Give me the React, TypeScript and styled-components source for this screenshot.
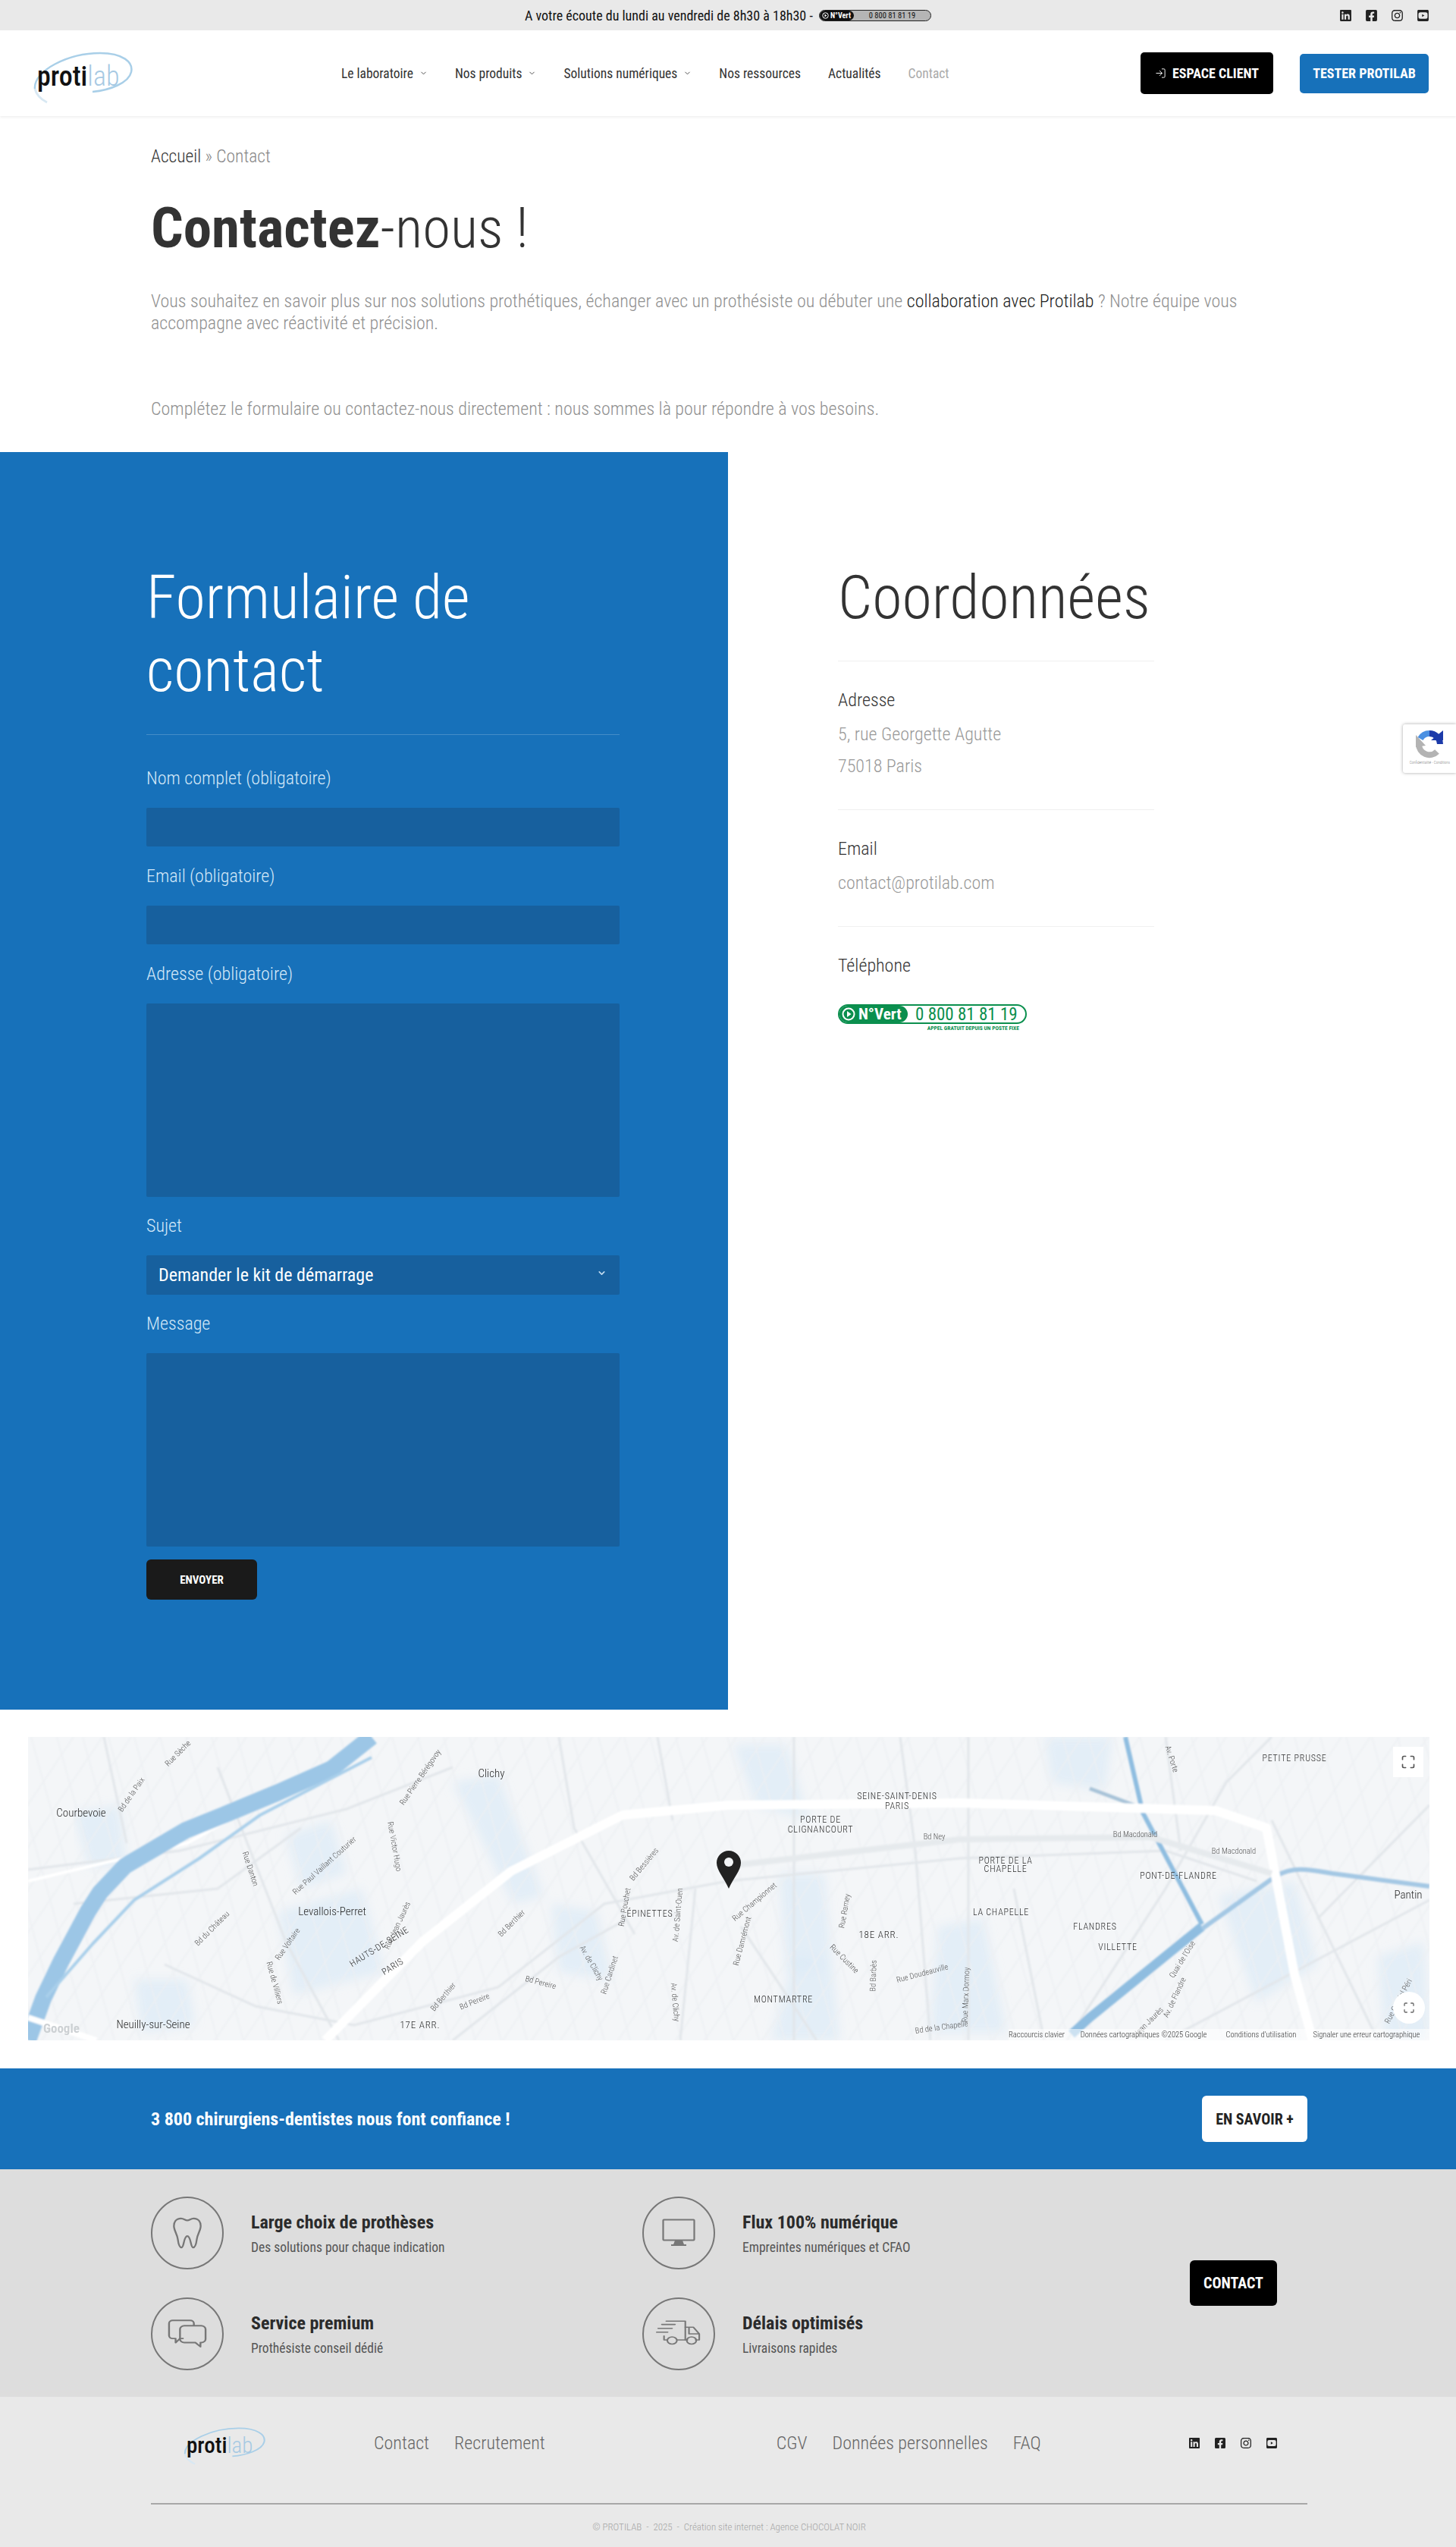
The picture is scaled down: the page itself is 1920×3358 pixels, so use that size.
import React from 'react'
import styled, { createGlobalStyle } from 'styled-components'
import { FaLinkedin, FaFacebookSquare, FaInstagram, FaYoutubeSquare } from 'react-icons/fa'
import { LogIn, ChevronDown, Maximize } from 'lucide-react'

const BLUE = '#1771ba'
const FIELD = '#17609e'
const GREEN = '#0b8f4e'
const FONT = `'Roboto Condensed', Roboto, 'Liberation Sans', sans-serif`

const GlobalStyle = createGlobalStyle`
  * { box-sizing: border-box; }
  html, body { margin: 0; padding: 0; background: #fff; }
  body {
    font-family: ${FONT};
    font-stretch: 75%;
    color: #333;
  }
  p, h1, h2, h3, ul { margin: 0; padding: 0; }
`

const thinRoads = [
  'M0 175 L200 150 L420 95 L560 40',
  'M250 40 L340 270 L410 400',
  'M180 300 L300 355 L430 380 L620 330 L760 220 L923 190 L1229 160 L1500 150 L1620 190',
  'M560 400 L700 290 L790 240',
  'M700 0 L720 120 L800 260',
  'M1010 0 L1010 400',
  'M1150 0 L1170 150 L1190 400',
  'M1240 0 L1240 400',
  'M1370 400 L1500 200 L1580 60 L1640 0',
  'M1500 400 L1848 215',
  'M1640 110 L1780 400',
  'M1848 90 L1700 240',
  'M100 0 L130 140',
  'M1500 0 L1520 150',
  'M830 0 L850 110',
  'M880 200 L860 400',
  'M940 250 L1040 400',
  'M1300 200 L1340 400',
  'M60 220 L250 200 L360 120',
]
const patches = [
  'M330 230 L440 200 L470 310 L350 340 Z',
  'M340 130 L400 110 L420 180 L360 200 Z',
  'M560 60 L620 50 L680 210 L640 220 Z',
  'M930 10 L1000 10 L1030 110 L960 90 Z',
  'M990 180 L1050 180 L1060 300 L1000 310 Z',
  'M1200 250 L1260 240 L1290 390 L1190 390 Z',
  'M1570 210 L1670 190 L1700 300 L1620 350 Z',
  'M1340 0 L1430 0 L1420 70 L1350 60 Z',
  'M1010 290 L1060 300 L1070 400 L980 400 Z',
  'M690 220 L750 230 L770 320 L700 310 Z',
  'M60 100 L120 90 L130 170 L80 170 Z',
  'M1840 270 L1780 290 L1790 400 L1848 400 Z',
  'M140 320 L210 320 L220 380 L150 390 Z',
]

// fine street mesh, drawn as two diagonal families
const meshA = Array.from({ length: 62 }, (_, i) => `M${i * 34 - 200} 0 L${i * 34 - 90} 400`)
const meshB = Array.from({ length: 62 }, (_, i) => `M${i * 38 + 60} 0 L${i * 38 - 210} 400`)

const places = [
  { x: 70, y: 100, t: 'Courbevoie', s: 15 },
  { x: 611, y: 48, t: 'Clichy', s: 15 },
  { x: 401, y: 230, t: 'Levallois-Perret', s: 15 },
  { x: 165, y: 379, t: 'Neuilly-sur-Seine', s: 15 },
  { x: 1820, y: 208, t: 'Pantin', s: 15 },
  { x: 517, y: 379, t: '17E ARR.', s: 13 },
  { x: 820, y: 232, t: 'ÉPINETTES', s: 12 },
  { x: 1146, y: 77, t: 'SEINE-SAINT-DENIS', s: 12 },
  { x: 1146, y: 90, t: 'PARIS', s: 12 },
  { x: 1045, y: 108, t: 'PORTE DE', s: 12 },
  { x: 1045, y: 121, t: 'CLIGNANCOURT', s: 12 },
  { x: 1289, y: 162, t: 'PORTE DE LA', s: 12 },
  { x: 1289, y: 173, t: 'CHAPELLE', s: 12 },
  { x: 1517, y: 182, t: 'PONT-DE-FLANDRE', s: 12 },
  { x: 1283, y: 230, t: 'LA CHAPELLE', s: 12 },
  { x: 1407, y: 249, t: 'FLANDRES', s: 12 },
  { x: 1437, y: 276, t: 'VILLETTE', s: 12 },
  { x: 1122, y: 260, t: '18E ARR.', s: 13 },
  { x: 996, y: 345, t: 'MONTMARTRE', s: 12 },
  { x: 1670, y: 27, t: 'PETITE PRUSSE', s: 12 },
]
const streets = [
  { x: 139, y: 78, r: -55, t: 'Bd de la Paix' },
  { x: 520, y: 55, r: -55, t: 'Rue Pierre Bérégovoy' },
  { x: 393, y: 172, r: -42, t: 'Rue Paul Vaillant Couturier' },
  { x: 290, y: 175, r: 72, t: 'Rue Danton' },
  { x: 480, y: 145, r: 80, t: 'Rue Victor Hugo' },
  { x: 245, y: 255, r: -45, t: 'Bd du Château' },
  { x: 345, y: 275, r: -55, t: 'Rue Voltaire' },
  { x: 322, y: 325, r: 75, t: 'Rue de Villiers' },
  { x: 490, y: 250, r: -65, t: 'Rue Jean Jaurès' },
  { x: 550, y: 345, r: -50, t: 'Bd Berthier' },
  { x: 590, y: 352, r: -22, t: 'Bd Pereire' },
  { x: 675, y: 327, r: 15, t: 'Bd Pereire' },
  { x: 640, y: 248, r: -45, t: 'Bd Berthier' },
  { x: 740, y: 300, r: 60, t: 'Av. de Clichy' },
  { x: 770, y: 315, r: -72, t: 'Rue Cardinet' },
  { x: 815, y: 170, r: -50, t: 'Bd Bessières' },
  { x: 790, y: 225, r: -80, t: 'Rue Pouchet' },
  { x: 860, y: 235, r: -85, t: 'Av. de Saint-Ouen' },
  { x: 850, y: 350, r: 85, t: 'Av. de Clichy' },
  { x: 960, y: 220, r: -40, t: 'Rue Championnet' },
  { x: 945, y: 270, r: -75, t: 'Rue Damrémont' },
  { x: 1080, y: 230, r: -80, t: 'Rue Ramey' },
  { x: 1074, y: 295, r: 45, t: 'Rue Custine' },
  { x: 1118, y: 315, r: -88, t: 'Bd Barbès' },
  { x: 1180, y: 315, r: -15, t: 'Rue Doudeauville' },
  { x: 1240, y: 340, r: -88, t: 'Rue Marx Dormoy' },
  { x: 1205, y: 386, r: -8, t: 'Bd de la Chapelle' },
  { x: 1195, y: 135, r: 0, t: 'Bd Ney' },
  { x: 1460, y: 132, r: 0, t: 'Bd Macdonald' },
  { x: 1590, y: 154, r: 0, t: 'Bd Macdonald' },
  { x: 1515, y: 345, r: -65, t: 'Av. de Flandre' },
  { x: 1525, y: 295, r: -58, t: 'Quai de l\u2019Oise' },
  { x: 1480, y: 378, r: -45, t: 'Jean Jaurès' },
  { x: 1810, y: 350, r: -62, t: 'Rue Gabriel Péri' },
  { x: 1505, y: 30, r: 72, t: 'Av. Porte' },
  { x: 200, y: 24, r: -45, t: 'Rue Sèche' },
]
const legal = [
  { x: 1330, t: 'Raccourcis clavier' },
  { x: 1471, t: 'Données cartographiques ©2025 Google' },
  { x: 1626, t: 'Conditions d\u2019utilisation' },
  { x: 1765, t: 'Signaler une erreur cartographique' },
]

const MapDrawing = () => (
  <svg width="1848" height="400" viewBox="0 0 1848 400" style={{ display: 'block' }}>
    <defs>
      <filter id="soft" x="0" y="0" width="100%" height="100%">
        <feGaussianBlur stdDeviation="1.2" />
      </filter>
      <filter id="softer" x="0" y="0" width="100%" height="100%">
        <feGaussianBlur stdDeviation="7" />
      </filter>
    </defs>
    <rect width="1848" height="400" fill="#f4f6f8" />
    <g filter="url(#softer)">
      {patches.map((d, i) => (
        <path key={i} d={d} fill="#d6e8f5" opacity="0.55" />
      ))}
    </g>
    <g filter="url(#soft)">
      <g stroke="#edf0f3" strokeWidth="1.5" fill="none">
        {meshA.map((d, i) => <path key={i} d={d} />)}
        {meshB.map((d, i) => <path key={i} d={d} />)}
      </g>
      {thinRoads.map((d, i) => (
        <path key={i} d={d} fill="none" stroke="#e2e6ea" strokeWidth="3" />
      ))}
      <path d="M0 190 L210 140 L300 90" fill="none" stroke="#fff" strokeWidth="4" />
      <path d="M453 0 L400 42 L330 73 L265 100 L208 123 L128 170 L95 205 L79 230 L43 297 L20 345 L0 400" fill="none" stroke="#9cc6e6" strokeWidth="22" strokeLinejoin="round" />
      <path d="M453 27 L306 103 L226 160 L140 215 L85 273 L24 343" fill="none" stroke="#a9cfea" strokeWidth="4" strokeLinejoin="round" />
      <path d="M1447 0 L1470 100 L1548 247" fill="none" stroke="#8fbde0" strokeWidth="6" />
      <path d="M1548 250 L1400 370 L1376 392" fill="none" stroke="#8fbde0" strokeWidth="12" />
      <path d="M1548 253 L1646 183 C1670 170 1690 175 1720 180 L1848 197" fill="none" stroke="#a4c8e4" strokeWidth="6" />
      <path d="M1400 68 L1480 98" fill="none" stroke="#a8c3d8" strokeWidth="5" />
      <path d="M392 400 L520 270 L637 177 L784 103 L923 90 L1229 87 L1566 97 L1633 120 L1670 313 L1694 400" fill="none" stroke="#fff" strokeWidth="12" strokeLinejoin="round" />
      <path d="M0 370 L90 400" fill="none" stroke="#fff" strokeWidth="8" />
      <path d="M923 170 L1229 135 L1480 132 L1640 180" fill="none" stroke="#e6eaed" strokeWidth="8" />
    </g>
    <g fontFamily={FONT} fill="#555">
      {streets.map(s => (
        <text key={s.t + s.x} x={s.x} y={s.y} fontSize="10.5" textAnchor="middle" transform={`rotate(${s.r} ${s.x} ${s.y})`}>
          {s.t}
        </text>
      ))}
    </g>
    <g fontFamily={FONT} fill="#2a2a2a" textAnchor="middle">
      {places.map(p => (
        <text key={p.t + p.x} x={p.x} y={p.y + 5} fontSize={p.s} letterSpacing={p.s < 14 ? 0.8 : 0}>
          {p.t}
        </text>
      ))}
      <text x="465" y="280" fontSize="12" letterSpacing="0.6" transform="rotate(-32 465 280)">HAUTS-DE-SEINE</text>
      <text x="483" y="306" fontSize="12" letterSpacing="0.6" transform="rotate(-32 483 306)">PARIS</text>
    </g>
    <text x="20" y="390" fontFamily={FONT} fontSize="17" fontWeight="700" fill="#cdd1d4">Google</text>
    <rect x="1293" y="385" width="555" height="15" fill="#fff" opacity="0.55" />
    <g fontFamily={FONT} fill="#333" fontSize="10.5" textAnchor="middle">
      {legal.map(l => (
        <text key={l.t} x={l.x} y={396}>{l.t}</text>
      ))}
    </g>
    <path d="M924 200 C918 186 908 176 908 166 A16 16 0 0 1 940 166 C940 176 930 186 924 200 Z" fill="#222" />
    <circle cx="924" cy="165" r="6" fill="#f2f4f6" />
  </svg>
)

const ToothIcon = () => (
  <svg width="40" height="44" viewBox="0 0 48 52" fill="none" stroke="#777" strokeWidth="2.8" strokeLinejoin="round">
    <path d="M14 3 C6 3 2 9 3 17 C4 24 8 28 9 36 C10 44 12 49 15 49 C19 49 18 31 24 31 C30 31 29 49 33 49 C36 49 38 44 39 36 C40 28 44 24 45 17 C46 9 42 3 34 3 C29 3 28 6 24 6 C20 6 19 3 14 3 Z" />
  </svg>
)
const ScreenIcon = () => (
  <svg width="44" height="37" viewBox="0 0 44 37" fill="none" stroke="#777" strokeWidth="2.2">
    <rect x="1.5" y="1.5" width="41" height="27" rx="1" />
    <path d="M18 29 L16.5 33 H27.5 L26 29 Z M12 35 H32" fill="#777" strokeWidth="2" />
  </svg>
)
const ChatIcon = () => (
  <svg width="52" height="40" viewBox="0 0 54 52" preserveAspectRatio="none" fill="none" stroke="#777" strokeWidth="2.5" strokeLinejoin="round">
    <path d="M22 34 H17 L11 41 V34 H7 A5 5 0 0 1 2 29 V8 A5 5 0 0 1 7 3 H31 A5 5 0 0 1 36 8 V12" />
    <path d="M23 12 H46 A6 6 0 0 1 52 18 V35 A6 6 0 0 1 46 41 H45 V48 L38 41 H23 A6 6 0 0 1 17 35 V18 A6 6 0 0 1 23 12 Z" />
  </svg>
)
const TruckIcon = () => (
  <svg width="60" height="38" viewBox="0 0 62 52" preserveAspectRatio="none" fill="none" stroke="#777" strokeWidth="2.2" strokeLinejoin="round" strokeLinecap="round">
    <path d="M14 3 H40 V37 H29 M15 37 H11 V30" />
    <path d="M40 14 H51 L59 26 V37 H54 M43 37 H40 M45 14 V26 H59" />
    <circle cx="22" cy="38" r="6.5" />
    <circle cx="48.5" cy="38" r="6.5" />
    <path d="M8 9 H26 M3 16 H22 M1 23 H16" />
  </svg>
)

const socials = [FaLinkedin, FaFacebookSquare, FaInstagram, FaYoutubeSquare]
const features = [
  { icon: <ToothIcon />, title: 'Large choix de prothèses', text: 'Des solutions pour chaque indication' },
  { icon: <ScreenIcon />, title: 'Flux 100% numérique', text: 'Empreintes numériques et CFAO' },
  { icon: <ChatIcon />, title: 'Service premium', text: 'Prothésiste conseil dédié' },
  { icon: <TruckIcon />, title: 'Délais optimisés', text: 'Livraisons rapides' },
]

const Logo = ({ small }: { small?: boolean }) => (
  <LogoBox $small={small}>
    <LogoArc viewBox="0 0 135 80" preserveAspectRatio="none">
      <path d="M6 60 C4 36 50 13 92 13 C122 13 136 25 133 38 C130 52 105 62 82 64" fill="none" stroke="#a9cfe8" strokeWidth="2.5" />
      <path d="M6 60 C8 68 14 74 22 78" fill="none" stroke="#d8e8f3" strokeWidth="3" />
    </LogoArc>
    <LogoDark>proti</LogoDark>
    <LogoLight>lab</LogoLight>
  </LogoBox>
)

const GreenNumber = ({ small }: { small?: boolean }) => (
  <NumberPill $small={small}>
    <NumberTag $small={small}>
      <svg width={small ? 9 : 18} height={small ? 9 : 18} viewBox="0 0 18 18">
        <circle cx="9" cy="9" r="7.5" fill="none" stroke="#fff" strokeWidth="2" />
        <path d="M7 5 L12.5 9 L7 13 Z" fill="#fff" />
      </svg>
      N°Vert
    </NumberTag>
    <NumberDigits $small={small}>0 800 81 81 19</NumberDigits>
  </NumberPill>
)

const App = () => (
  <Page>
    <GlobalStyle />
    <TopBar>
      <span />
      <TopText>
        A votre écoute du lundi au vendredi de 8h30 à 18h30 - <GreenNumber small />
      </TopText>
      <SocialRow $gap={17} $size={17}>
        {socials.map((Icon, i) => <Icon key={i} />)}
      </SocialRow>
    </TopBar>

    <Header>
      <Logo />
      <Nav>
        <NavItem>Le laboratoire <ChevronDown size={11} /></NavItem>
        <NavItem>Nos produits <ChevronDown size={11} /></NavItem>
        <NavItem>Solutions numériques <ChevronDown size={11} /></NavItem>
        <NavItem>Nos ressources</NavItem>
        <NavItem>Actualités</NavItem>
        <NavItem $muted>Contact</NavItem>
      </Nav>
      <HeaderActions>
        <HeaderButton $bg="#000" $w={175} $h={55}><LogIn size={15} strokeWidth={1.5} /> ESPACE CLIENT</HeaderButton>
        <HeaderButton $bg={BLUE} $w={170} $h={52}>TESTER PROTILAB</HeaderButton>
      </HeaderActions>
    </Header>

    <Intro>
      <Breadcrumb><b>Accueil</b> » Contact</Breadcrumb>
      <PageTitle><strong>Contactez</strong>-nous !</PageTitle>
      <Lead>
        Vous souhaitez en savoir plus sur nos solutions prothétiques, échanger avec un prothésiste ou débuter une <b>collaboration avec Protilab</b> ? Notre équipe vous accompagne avec réactivité et précision.
      </Lead>
      <LeadLast>Complétez le formulaire ou contactez-nous directement : nous sommes là pour répondre à vos besoins.</LeadLast>
    </Intro>

    <ContactGrid>
      <FormPanel>
        <PanelTitle>Formulaire de<br />contact</PanelTitle>
        <PanelRule />
        <FieldLabel>Nom complet (obligatoire)</FieldLabel>
        <FieldInput />
        <FieldLabel>Email (obligatoire)</FieldLabel>
        <FieldInput />
        <FieldLabel>Adresse (obligatoire)</FieldLabel>
        <FieldArea />
        <FieldLabel>Sujet</FieldLabel>
        <SelectWrap>
          <FieldSelect defaultValue="kit">
            <option value="kit">Demander le kit de démarrage</option>
          </FieldSelect>
          <SelectChevron><ChevronDown size={13} strokeWidth={3} /></SelectChevron>
        </SelectWrap>
        <FieldLabel>Message</FieldLabel>
        <FieldArea />
        <SendButton type="button">ENVOYER</SendButton>
      </FormPanel>

      <Details>
        <DetailsTitle>Coordonnées</DetailsTitle>
        <DetailBlock>
          <DetailLabel>Adresse</DetailLabel>
          <DetailLine>5, rue Georgette Agutte</DetailLine>
          <DetailLine>75018 Paris</DetailLine>
        </DetailBlock>
        <DetailBlock>
          <DetailLabel>Email</DetailLabel>
          <DetailLine>contact@protilab.com</DetailLine>
        </DetailBlock>
        <DetailBlock>
          <DetailLabel>Téléphone</DetailLabel>
          <PhoneWrap>
            <GreenNumber />
            <PhoneNote>APPEL GRATUIT DEPUIS UN POSTE FIXE</PhoneNote>
          </PhoneWrap>
        </DetailBlock>
      </Details>
    </ContactGrid>

    <MapSection>
      <MapFrame>
        <MapDrawing />
        <MapFullscreen><Maximize size={20} strokeWidth={2} /></MapFullscreen>
        <MapCompass><Maximize size={16} strokeWidth={2} /></MapCompass>
      </MapFrame>
    </MapSection>

    <Banner>
      <BannerText>3 800 chirurgiens-dentistes nous font confiance !</BannerText>
      <BannerButton>EN SAVOIR +</BannerButton>
    </Banner>

    <Features>
      <FeatureGrid>
        {features.map(f => (
          <Feature key={f.title}>
            <FeatureCircle>{f.icon}</FeatureCircle>
            <div>
              <FeatureTitle>{f.title}</FeatureTitle>
              <FeatureText>{f.text}</FeatureText>
            </div>
          </Feature>
        ))}
      </FeatureGrid>
      <ContactButton>CONTACT</ContactButton>
    </Features>

    <Footer>
      <FooterRow>
        <Logo small />
        <FooterLinks $left={143}>
          <FooterLink>Contact</FooterLink>
          <FooterLink>Recrutement</FooterLink>
        </FooterLinks>
        <FooterLinks $left={305}>
          <FooterLink>CGV</FooterLink>
          <FooterLink>Données personnelles</FooterLink>
          <FooterLink>FAQ</FooterLink>
        </FooterLinks>
        <FooterSocials>
          <SocialRow $gap={18} $size={16}>
            {socials.map((Icon, i) => <Icon key={i} />)}
          </SocialRow>
        </FooterSocials>
      </FooterRow>
      <FooterRule />
      <Copyright>© PROTILAB  -  2025  -  Création site internet : Agence CHOCOLAT NOIR</Copyright>
    </Footer>

    <Recaptcha>
      <svg width="40" height="40" viewBox="0 0 40 40" fill="none">
        <path d="M20 6 A14 14 0 0 0 8 13" stroke="#4a90e2" strokeWidth="8" />
        <path d="M20 6 A14 14 0 0 1 34 20" stroke="#1c3aa9" strokeWidth="8" />
        <path d="M22 15 L38 15 L38 2 Z" fill="#1c3aa9" />
        <path d="M6 20 A14 14 0 0 0 30 30" stroke="#b3b3b3" strokeWidth="8" />
        <path d="M2 8 L2 24 L15 22 Z" fill="#b3b3b3" />
      </svg>
      <RecaptchaText>Confidentialité - Conditions</RecaptchaText>
    </Recaptcha>
  </Page>
)

const Page = styled.div`
  position: relative;
  width: 1920px;
  overflow: hidden;
  font-family: ${FONT};
  font-weight: 300;
`

const TopBar = styled.div`
  height: 40px;
  background: #e9e9e9;
  display: grid;
  grid-template-columns: 1fr auto 1fr;
  align-items: center;
  padding: 0 35px;
`

const TopText = styled.div`
  display: flex;
  align-items: center;
  gap: 4px;
  white-space: pre;
  font-size: 18px;
  font-weight: 400;
  color: #111;
`

const SocialRow = styled.div<{ $gap: number; $size: number }>`
  display: flex;
  justify-content: flex-end;
  gap: ${p => p.$gap}px;
  color: #222;
  font-size: ${p => p.$size}px;
  line-height: 0;
`

const NumberPill = styled.span<{ $small?: boolean }>`
  display: inline-flex;
  align-items: center;
  height: ${p => (p.$small ? 15 : 26)}px;
  width: ${p => (p.$small ? 148 : 249)}px;
  border-radius: 14px;
  border: ${p => (p.$small ? 1 : 2)}px solid ${p => (p.$small ? '#222' : GREEN)};
  background: ${p => (p.$small ? '#b5b5b5' : '#fff')};
  overflow: hidden;
`

const NumberTag = styled.span<{ $small?: boolean }>`
  display: inline-flex;
  align-items: center;
  gap: ${p => (p.$small ? 2 : 4)}px;
  height: 100%;
  padding: 0 ${p => (p.$small ? 4 : 8)}px 0 3px;
  border-radius: 0 12px 12px 0;
  background: ${p => (p.$small ? '#111' : GREEN)};
  color: #fff;
  font-family: Roboto, sans-serif;
  font-weight: 700;
  font-size: ${p => (p.$small ? 10 : 21)}px;
`

const NumberDigits = styled.span<{ $small?: boolean }>`
  flex: 1;
  text-align: center;
  font-family: Roboto, sans-serif;
  font-weight: 400;
  font-size: ${p => (p.$small ? 10.5 : 23)}px;
  color: ${p => (p.$small ? '#111' : GREEN)};
  white-space: nowrap;
`

const Header = styled.header`
  height: 113px;
  display: flex;
  align-items: center;
  padding: 0 36px 0 40px;
  background: #fff;
  box-shadow: 0 2px 3px rgba(0, 0, 0, 0.06);
  position: relative;
`

const LogoBox = styled.div<{ $small?: boolean }>`
  position: relative;
  width: ${p => (p.$small ? 111 : 135)}px;
  height: ${p => (p.$small ? 58 : 80)}px;
  margin-left: ${p => (p.$small ? 40 : 0)}px;
  padding: ${p => (p.$small ? '6px 0 0 7px' : '8px 0 0 9px')};
  display: flex;
  align-items: center;
  font-family: Roboto, sans-serif;
  font-size: ${p => (p.$small ? 29 : 36)}px;
`

const LogoArc = styled.svg`
  position: absolute;
  inset: 0;
  width: 100%;
  height: 100%;
`

const LogoDark = styled.span`
  color: #111;
  font-weight: 500;
  position: relative;
`

const LogoLight = styled.span`
  color: #a6c9e3;
  font-weight: 300;
  position: relative;
`

const Nav = styled.nav`
  display: flex;
  align-items: center;
  gap: 36px;
  margin-left: 275px;
`

const NavItem = styled.a<{ $muted?: boolean }>`
  display: inline-flex;
  align-items: center;
  gap: 8px;
  font-size: 17.5px;
  font-weight: 400;
  color: ${p => (p.$muted ? '#aaa' : '#333')};
  svg { color: #444; }
`

const HeaderActions = styled.div`
  margin-left: auto;
  display: flex;
  align-items: center;
  gap: 35px;
`

const HeaderButton = styled.a<{ $bg: string; $w: number; $h: number }>`
  display: flex;
  align-items: center;
  justify-content: center;
  gap: 8px;
  width: ${p => p.$w}px;
  height: ${p => p.$h}px;
  border-radius: 5px;
  background: ${p => p.$bg};
  color: #fff;
  font-size: 18px;
  font-weight: 700;
`

const Intro = styled.section`
  padding: 38px 199px 0;
  height: 443px;
`

const Breadcrumb = styled.div`
  font-size: 23.5px;
  line-height: 30px;
  color: #888;
  b { font-weight: 300; color: #333; }
`

const PageTitle = styled.h1`
  margin-top: 31px;
  font-size: 75px;
  line-height: 96px;
  font-weight: 300;
  color: #333;
  strong { font-weight: 700; }
`

const Lead = styled.p`
  margin-top: 35px;
  font-size: 24px;
  line-height: 29px;
  color: #909090;
  max-width: 1480px;
  b { font-weight: 300; color: #222; }
`

const LeadLast = styled(Lead)`
  margin-top: 84px;
`

const ContactGrid = styled.section`
  display: grid;
  grid-template-columns: 960px 1fr;
  height: 1658px;
`

const FormPanel = styled.form`
  background: ${BLUE};
  padding: 144px 143px 0 193px;
`

const PanelTitle = styled.h2`
  font-size: 80px;
  line-height: 96px;
  font-weight: 300;
  color: #fff;
`

const PanelRule = styled.div`
  height: 1px;
  margin: 36px 0 42px;
  background: rgba(255, 255, 255, 0.2);
`

const FieldLabel = styled.label`
  display: block;
  font-size: 24px;
  line-height: 30px;
  color: #d4e8f8;
  margin-bottom: 24px;
`

const FieldInput = styled.input`
  display: block;
  width: 100%;
  height: 51px;
  margin-bottom: 24px;
  border: 0;
  border-radius: 2px;
  background: ${FIELD};
`

const FieldArea = styled.textarea`
  display: block;
  width: 100%;
  height: 255px;
  margin-bottom: 23px;
  border: 0;
  border-radius: 2px;
  background: ${FIELD};
  resize: none;
`

const SelectWrap = styled.div`
  position: relative;
  margin-bottom: 23px;
`

const FieldSelect = styled.select`
  display: block;
  width: 100%;
  height: 52px;
  padding: 0 16px;
  border: 0;
  border-radius: 2px;
  appearance: none;
  background: ${FIELD};
  color: #fff;
  font-family: ${FONT};
  font-stretch: 75%;
  font-size: 24px;
  font-weight: 400;
`

const SelectChevron = styled.span`
  position: absolute;
  right: 17px;
  top: 17px;
  color: #c3dcf0;
  line-height: 0;
`

const SendButton = styled.button`
  display: block;
  width: 146px;
  height: 53px;
  margin-top: -6px;
  border: 0;
  border-radius: 6px;
  background: #1a1a1a;
  color: #fff;
  font-family: ${FONT};
  font-stretch: 75%;
  font-size: 15px;
  font-weight: 700;
`

const Details = styled.div`
  padding: 144px 0 0 145px;
  width: 562px;
`

const DetailsTitle = styled.h2`
  font-size: 80px;
  line-height: 96px;
  font-weight: 300;
  color: #333;
  margin-bottom: 35px;
`

const DetailBlock = styled.div`
  border-top: 1px solid #f0f0f0;
  padding: 36px 0;
  width: 417px;
  &:last-child { padding-bottom: 0; }
`

const DetailLabel = styled.div`
  font-size: 24px;
  line-height: 30px;
  font-weight: 300;
  color: #333;
  margin-bottom: 9px;
`

const DetailLine = styled.div`
  font-size: 24px;
  line-height: 42px;
  color: #999;
`

const PhoneWrap = styled.div`
  margin-top: 36px;
  width: 249px;
  text-align: right;
`

const PhoneNote = styled.div`
  font-size: 7.5px;
  line-height: 12px;
  font-weight: 700;
  color: ${GREEN};
  padding-right: 10px;
`

const MapSection = styled.section`
  padding: 36px 35px 37px 37px;
`

const MapFrame = styled.div`
  position: relative;
  height: 400px;
`

const MapFullscreen = styled.span`
  position: absolute;
  top: 13px;
  right: 8px;
  width: 40px;
  height: 40px;
  display: flex;
  align-items: center;
  justify-content: center;
  background: #fff;
  color: #555;
`

const MapCompass = styled.span`
  position: absolute;
  top: 336px;
  right: 6px;
  width: 42px;
  height: 42px;
  display: flex;
  align-items: center;
  justify-content: center;
  border-radius: 50%;
  background: #fff;
  color: #666;
`

const Banner = styled.section`
  height: 133px;
  background: ${BLUE};
  display: flex;
  align-items: center;
  justify-content: space-between;
  padding: 0 196px 0 199px;
`

const BannerText = styled.div`
  font-size: 24px;
  font-weight: 700;
  color: #fff;
`

const BannerButton = styled.a`
  width: 139px;
  height: 61px;
  display: flex;
  align-items: center;
  justify-content: center;
  border-radius: 6px;
  background: #fff;
  color: #222;
  font-size: 20px;
  font-weight: 700;
`

const Features = styled.section`
  height: 300px;
  background: #dddddd;
  display: flex;
  align-items: center;
  padding: 0 0 0 199px;
`

const FeatureGrid = styled.div`
  display: grid;
  grid-template-columns: 648px 722px;
  row-gap: 37px;
`

const Feature = styled.div`
  display: flex;
  align-items: center;
  gap: 36px;
`

const FeatureCircle = styled.div`
  width: 96px;
  height: 96px;
  border: 2.5px solid #777;
  border-radius: 50%;
  display: flex;
  align-items: center;
  justify-content: center;
`

const FeatureTitle = styled.div`
  font-size: 24px;
  line-height: 30px;
  font-weight: 700;
  color: #2b2b2b;
  margin: 2px 0 6px;
`

const FeatureText = styled.div`
  font-size: 17.5px;
  line-height: 24px;
  font-weight: 400;
  color: #555;
`

const ContactButton = styled.a`
  width: 115px;
  height: 60px;
  display: flex;
  align-items: center;
  justify-content: center;
  border-radius: 6px;
  background: #000;
  color: #fff;
  font-size: 20px;
  font-weight: 700;
`

const Footer = styled.footer`
  height: 198px;
  background: #e9e9e9;
  padding: 30px 196px 0 199px;
`

const FooterRow = styled.div`
  display: flex;
  align-items: center;
  height: 62px;
`

const FooterLinks = styled.div<{ $left: number }>`
  display: flex;
  gap: 33px;
  margin-left: ${p => p.$left}px;
`

const FooterLink = styled.a`
  font-size: 24px;
  color: #666;
`

const FooterSocials = styled.div`
  margin-left: auto;
  margin-right: 39px;
`

const FooterRule = styled.div`
  height: 2px;
  margin-top: 48px;
  background: #a8a8a8;
`

const Copyright = styled.div`
  margin-top: 20px;
  text-align: center;
  font-size: 13px;
  line-height: 20px;
  color: #a5a5a5;
  white-space: pre;
`

const Recaptcha = styled.div`
  position: absolute;
  top: 955px;
  left: 1850px;
  width: 70px;
  height: 64px;
  padding-top: 6px;
  display: flex;
  flex-direction: column;
  align-items: center;
  background: #fff;
  border-radius: 3px 0 0 3px;
  box-shadow: 0 0 4px rgba(0, 0, 0, 0.35);
`

const RecaptchaText = styled.div`
  font-size: 6px;
  color: #777;
  white-space: nowrap;
  transform: scale(0.85);
`

export default App
